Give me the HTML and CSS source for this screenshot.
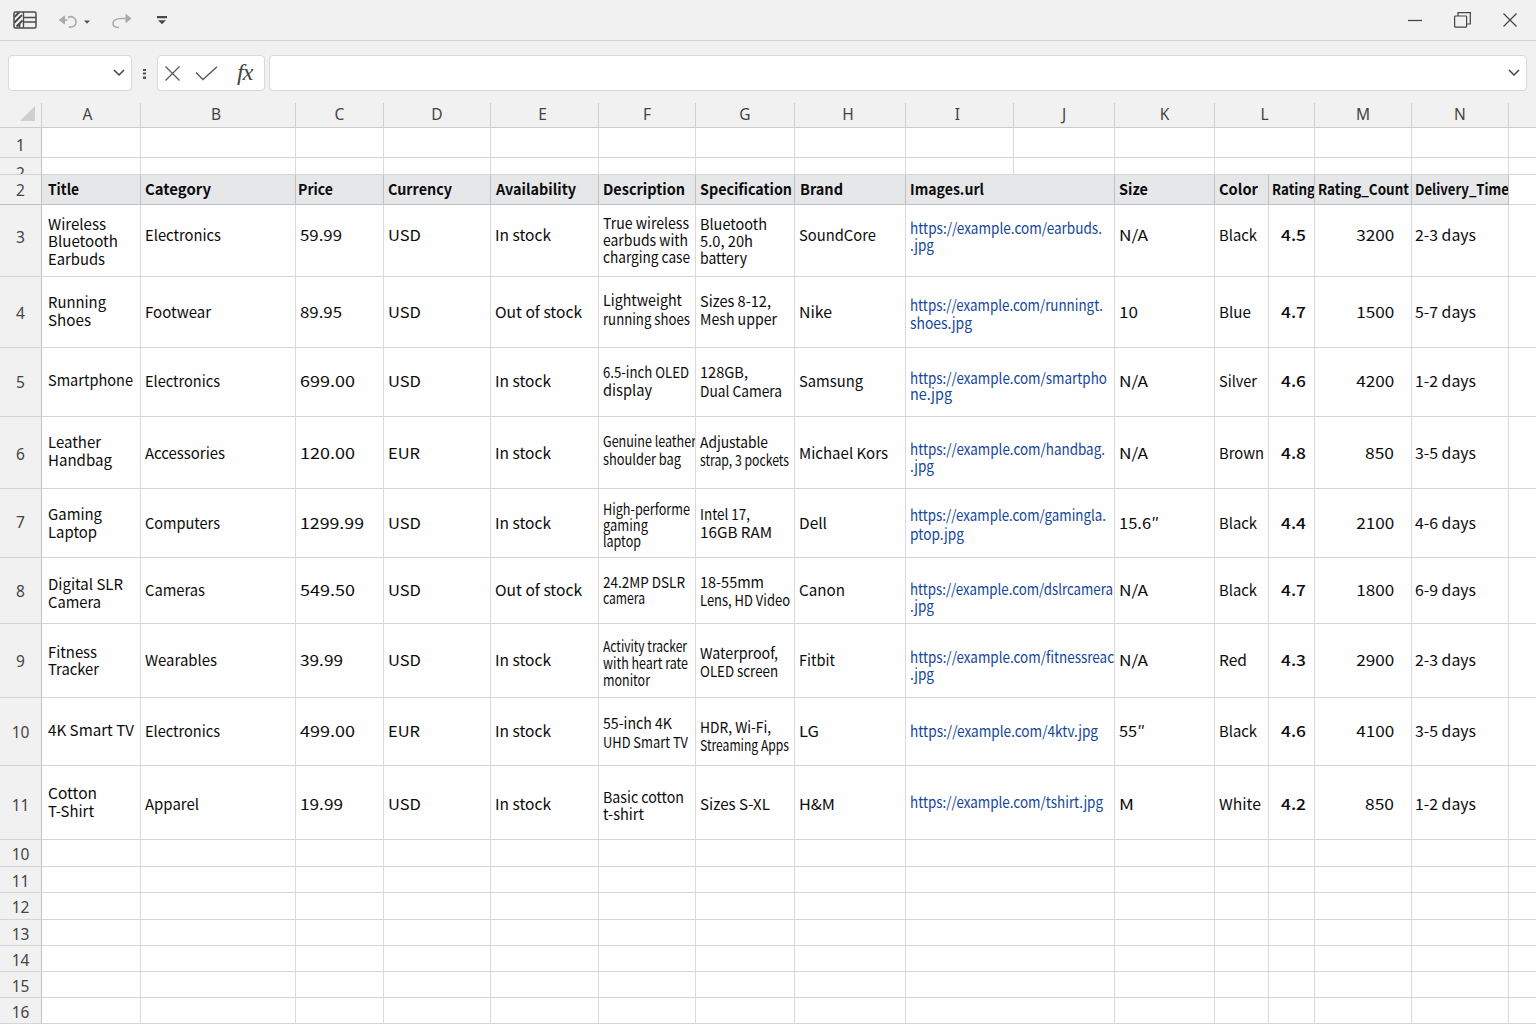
FILE: index.html
```html
<!DOCTYPE html>
<html lang="en">
<head>
  <meta charset="UTF-8" />
  <meta name="viewport" content="width=device-width, initial-scale=1" />
  <title>Products</title>
  <link rel="stylesheet" href="styles.css">
</head>
<body>
  <!-- Title bar -->
  <div class="titlebar">
    <div class="quick">
      <svg class="icon-sheet" width="24" height="18" viewBox="0 0 24 18" fill="none" stroke="#4a4a4a" stroke-width="1.5">
        <rect x="1" y="1" width="22" height="16" rx="1.5" />
        <path d="M10.500 1v16M10 6.500h13M10 11h13" stroke-width="1.300" />
        <path d="M1.500 6L6 1.500M1.500 11.500L9 4M3.500 15.500L9.500 9.500M6.500 12.500v4" stroke-width="1.900" />
      </svg>
      <svg class="icon-undo" width="20" height="15" viewBox="0 0 20 15" fill="none" stroke="#aaa" stroke-width="1.6">
        <path d="M1.500 6H9.500M10 3.500C14 1 18.500 4.500 18 8.500C17.500 12 15 13.500 10.500 13" />
        <path d="M6.500 2L1.500 6L6.500 10z" fill="#aaa" stroke-width="1" />
      </svg>
      <svg class="icon-caret" width="6" height="4" viewBox="0 0 6 4"><path d="M0 .5h6L3 3.800z" fill="#555" /></svg>
      <svg class="icon-redo" width="20" height="16" viewBox="0 0 20 16" fill="none" stroke="#aaa" stroke-width="1.600">
        <path d="M17 5.500H8.500C4 5.500 1 7.500 1 10.500C1 13 3.500 14.500 7 14.500" />
        <path d="M14 1.500l5 4l-5 4z" fill="#aaa" stroke-width="1" />
      </svg>
      <svg class="icon-more" width="10" height="9" viewBox="0 0 10 9"><path d="M0 0h10v2.200H0zM1 4.300h8L5 8.300z" fill="#4a4a4a" /></svg>
    </div>
    <div class="window">
      <svg width="14" height="16" viewBox="0 0 14 16"><path d="M0 8.500h14" stroke="#444" stroke-width="1.300" /></svg>
      <svg width="17" height="16" viewBox="0 0 17 16" fill="none" stroke="#444" stroke-width="1.200">
        <rect x=".6" y="4" width="12" height="11.200" rx=".8" />
        <path d="M4 4V.700h12.300V12h-3.500" />
      </svg>
      <svg width="14" height="16" viewBox="0 0 14 16"><path d="M.5 1.500l13 13M13.500 1.500l-13 13" stroke="#444" stroke-width="1.200" /></svg>
    </div>
  </div>

  <!-- Formula bar -->
  <div class="formula-bar">
    <div class="box name-box">
      <svg width="12" height="8" viewBox="0 0 12 8" fill="none" stroke="#444" stroke-width="1.500"><path d="M1 1l5 5l5-5" /></svg>
    </div>
    <svg class="dots" width="3" height="10" viewBox="0 0 3 10" fill="#555"><path d="M0 0h3v2H0zM0 3.500h3v2H0zM0 7.500h3V10H0z" /></svg>
    <div class="box actions">
      <svg width="15" height="15" viewBox="0 0 15 15"><path d="M.5 .5l14 14M14.500 .5l-14 14" stroke="#555" stroke-width="1.200" /></svg>
      <svg width="23" height="15" viewBox="0 0 23 15" fill="none"><path d="M1 6.500l7 7L22 .700" stroke="#555" stroke-width="1.300" /></svg>
      <span class="fx">fx</span>
    </div>
    <div class="box input-box">
      <svg width="12" height="8" viewBox="0 0 12 8" fill="none" stroke="#444" stroke-width="1.500"><path d="M1 1l5 5l5-5" /></svg>
    </div>
  </div>

  <!-- Column letters -->
  <div class="letters">
    <div class="corner"><svg width="15" height="15" viewBox="0 0 15 15"><path d="M15 0v15H0z" fill="#cdcfd1" /></svg></div>
    <div class="wide">A</div><div class="near">B</div><div>C</div><div>D</div><div class="near">E</div><div>F</div><div>G</div><div class="near">H</div>
    <div class="near">I</div><div>J</div><div>K</div><div>L</div><div>M</div><div>N</div><div></div>
  </div>

  <div class="sheet" id="sheet"></div>

  <script src="script.js"></script>
</body>
</html>
```

FILE: styles.css
```css
* {
  box-sizing: border-box;
}
body {
  margin: 0;
  width: 1536px;
  height: 1024px;
  overflow: hidden;
  background: #f1f1f1;
  color: #0c0c0c;
  font-family: "Noto Sans CJK SC", "Noto Sans", sans-serif;
  font-size: 15px;
}
svg {
  display: block;
  flex: none;
}
.titlebar {
  height: 41px;
  display: flex;
  justify-content: space-between;
  align-items: center;
  border-bottom: 1px solid #d2d3d4;
}
.quick {
  display: flex;
  align-items: center;
  padding-left: 13px;
}
.icon-undo {
  margin-left: 21px;
  margin-top: 3px;
}
.icon-caret {
  margin-left: 6px;
  margin-top: 3px;
}
.icon-redo {
  margin-left: 22px;
  margin-top: 1px;
}
.icon-more {
  margin-left: 25px;
  margin-top: 1px;
}
.window {
  display: flex;
  align-items: center;
  padding-right: 19px;
  gap: 32px;
}
.formula-bar {
  height: 62px;
  display: flex;
  align-items: center;
  padding: 2px 9px 0 8px;
}
.box {
  height: 36px;
  display: flex;
  align-items: center;
  background: #fefefe;
  border: 1px solid #d8d9da;
  border-radius: 4px;
}
.name-box {
  width: 124px;
  justify-content: flex-end;
  padding-right: 6px;
}
.dots {
  margin: 1px 11px 0 11px;
}
.actions {
  width: 108px;
  padding-left: 7px;
  gap: 15px;
}
.fx {
  font: italic 24px "Liberation Serif", serif;
  color: #444;
  letter-spacing: -1px;
  margin: -2px 0 0 4px;
}
.input-box {
  flex: 1;
  margin-left: 4px;
  justify-content: flex-end;
  padding-right: 6px;
}

.letters, .row {
  display: grid;
  grid-template-columns: 42px 99px 155px 88px 107px 108px 97px 99px 111px 209px 100px 54px 46px 97px 97px 27px;
}
.letters {
  grid-template-columns: 42px 99px 155px 88px 107px 108px 97px 99px 111px 108px 101px 100px 100px 97px 97px 27px;
  height: 25px;
  border-bottom: 1px solid #cbcccd;
  color: #444;
  font-family: "Noto Sans", sans-serif;
  font-size: 15.5px;
  line-height: 22px;
  text-align: center;
}
.letters div {
  border-right: 1px solid #d0d1d2;
}
.letters div:last-child {
  border-right: 0;
}
.letters .wide {
  padding-right: 7px;
}
.letters .near {
  padding-right: 4px;
}
.corner {
  padding: 3px 0 0 20px;
}

.row > div {
  background: #fefefe;
  border-right: 1px solid #d9dadb;
  border-bottom: 1px solid #d4d5d6;
  white-space: nowrap;
  overflow: hidden;
}
.row > div:last-child {
  border-right: 0;
}
.row > .num {
  background: #f1f1f1;
  border-right-color: #bfc1c3;
  color: #444;
  font-family: "Noto Sans", sans-serif;
  font-size: 15.5px;
  line-height: 20px;
  text-align: center;
}
.row.top {
  grid-template-columns: 42px 99px 155px 88px 107px 108px 97px 99px 111px 108px 101px 100px 100px 97px 97px 27px;
}
.row.head > div {
  border-color: #bfc1c3;
}
.row.head > div:not(.num) {
  background: #e6e7e9;
  font-weight: 700;
}
.row.head > div:last-child {
  background: #fefefe;
  border-bottom-color: #d4d5d6;
}
.line {
  display: block;
  width: max-content;
  transform-origin: left center;
}
.row > .link {
  color: #13469c;
}
.row > .rating {
  font-weight: 500;
}
.row > .count .line {
  margin-left: auto;
  margin-right: 17px;
  transform-origin: right center;
}
```

FILE: script.js
```js
const sheet = document.getElementById('sheet');

const classes = ['', '', '', '', '', '', '', '', 'link', '', '', 'rating', 'count', ''];
const indent = [6, 4, 4, 4, 4, 4, 4, 4, 4, 4, 4, 12, 0, 3];

// Cell: [middle of the first line, line pitch, text, width, text, width, ...]
const header = [
  ['Title', 31], ['Category', 66], ['Price', 35], ['Currency', 64],
  ['Availability', 80], ['Description', 82], ['Specification', 92], ['Brand', 43],
  ['Images.url', 74], ['Size', 29], ['Color', 39], ['Rating', 43],
  ['Rating_Count', 91], ['Delivery_Time', 94]
];

const rows = [
  { n: 3, top: 205, bottom: 277, y: 236, num: 237, cells: [
    [224.5, 17.3, 'Wireless', 58, 'Bluetooth', 70, 'Earbuds', 57], ['Electronics', 76], ['59.99', 42], ['USD', 33], ['In stock', 56],
    [223, 17, 'True wireless', 86, 'earbuds with', 85, 'charging case', 87], [224, 17.3, 'Bluetooth', 67, '5.0, 20h', 53, 'battery', 47],
    ['SoundCore', 77], [228, 17, 'https://example.com/earbuds.', 192, '.jpg', 24], ['N/A', 29], ['Black', 38], ['4.5', 25], ['3200', 38], ['2-3 days', 61]] },
  { n: 4, top: 277, bottom: 348, y: 312.5, num: 313, cells: [
    [303, 17.5, 'Running', 58, 'Shoes', 43], ['Footwear', 66], ['89.95', 42], ['USD', 33], ['Out of stock', 87],
    [301.5, 18.5, 'Lightweight', 79, 'running shoes', 87], [302, 18.5, 'Sizes 8-12,', 71, 'Mesh upper', 77],
    ['Nike', 33], [306, 17.5, 'https://example.com/runningt.', 193, 'shoes.jpg', 62], ['10', 19], ['Blue', 32], ['4.7', 25], ['1500', 38], ['5-7 days', 61]] },
  { n: 5, top: 348, bottom: 417, y: 382, num: 382, cells: [
    [380.5, 18, 'Smartphone', 85], ['Electronics', 75], ['699.00', 55], ['USD', 33], ['In stock', 56],
    [373, 18, '6.5-inch OLED', 86, 'display', 49], [373.5, 18.5, '128GB,', 48, 'Dual Camera', 82],
    ['Samsung', 64], [379, 16.5, 'https://example.com/smartpho', 197, 'ne.jpg', 42], ['N/A', 29], ['Silver', 38], ['4.6', 25], ['4200', 38], ['1-2 days', 61]] },
  { n: 6, top: 417, bottom: 489, y: 453.5, num: 454, cells: [
    [443, 17.5, 'Leather', 53, 'Handbag', 64], ['Accessories', 80], ['120.00', 55], ['EUR', 32], ['In stock', 56],
    [442, 18, 'Genuine leather', 93, 'shoulder bag', 78], [443, 18, 'Adjustable', 68, 'strap, 3 pockets', 89],
    ['Michael Kors', 89], [449, 17, 'https://example.com/handbag.', 195, '.jpg', 24], ['N/A', 29], ['Brown', 45], ['4.8', 25], ['850', 29], ['3-5 days', 61]] },
  { n: 7, top: 489, bottom: 558, y: 523.5, num: 522, cells: [
    [515, 17.5, 'Gaming', 54, 'Laptop', 49], ['Computers', 75], ['1299.99', 64], ['USD', 33], ['In stock', 56],
    [510, 16, 'High-performe', 87, 'gaming', 45, 'laptop', 38], [515, 18.5, 'Intel 17,', 50, '16GB RAM', 72],
    ['Dell', 28], [516.5, 18.5, 'https://example.com/gamingla.', 196, 'ptop.jpg', 54], ['15.6″', 40], ['Black', 38], ['4.4', 25], ['2100', 38], ['4-6 days', 61]] },
  { n: 8, top: 558, bottom: 624, y: 591, num: 591, cells: [
    [585, 17.5, 'Digital SLR', 75, 'Camera', 53], ['Cameras', 60], ['549.50', 55], ['USD', 33], ['Out of stock', 87],
    [583, 16.5, '24.2MP DSLR', 82, 'camera', 42], [583, 17.5, '18-55mm', 64, 'Lens, HD Video', 90],
    ['Canon', 46], [589, 17, 'https://example.com/dslrcamera', 203, '.jpg', 24], ['N/A', 29], ['Black', 38], ['4.7', 25], ['1800', 38], ['6-9 days', 61]] },
  { n: 9, top: 624, bottom: 698, y: 661, num: 661, cells: [
    [652.5, 17.5, 'Fitness', 49, 'Tracker', 51], ['Wearables', 72], ['39.99', 43], ['USD', 33], ['In stock', 56],
    [646, 17, 'Activity tracker', 84, 'with heart rate', 85, 'monitor', 47], [654, 18, 'Waterproof,', 78, 'OLED screen', 78],
    ['Fitbit', 36], [657, 17, 'https://example.com/fitnessreac', 204, '.jpg', 24], ['N/A', 29], ['Red', 28], ['4.3', 25], ['2900', 38], ['2-3 days', 61]] },
  { n: 10, top: 698, bottom: 766, y: 732, num: 732, cells: [
    [731, 18, '4K Smart TV', 86], ['Electronics', 75], ['499.00', 55], ['EUR', 32], ['In stock', 56],
    [723.5, 19, '55-inch 4K', 69, 'UHD Smart TV', 85], [728, 17.5, 'HDR, Wi-Fi,', 71, 'Streaming Apps', 89],
    ['LG', 20], [731.5, 18, 'https://example.com/4ktv.jpg', 188], ['55″', 26], ['Black', 38], ['4.6', 25], ['4100', 38], ['3-5 days', 61]] },
  { n: 11, top: 766, bottom: 840, y: 805, num: 805, cells: [
    [794, 17.5, 'Cotton', 49, 'T-Shirt', 46], ['Apparel', 54], ['19.99', 43], ['USD', 33], ['In stock', 56],
    [797, 17, 'Basic cotton', 81, 't-shirt', 41], [805, 18, 'Sizes S-XL', 70],
    ['H&M', 36], [803, 18, 'https://example.com/tshirt.jpg', 193], ['M', 15], ['White', 42], ['4.2', 25], ['850', 29], ['1-2 days', 61]] }
];

function addRow(n, top, bottom, y, cls) {
  const row = document.createElement('div');
  row.className = 'row ' + cls;
  row.style.height = (bottom - top) + 'px';
  const num = document.createElement('div');
  num.className = 'num';
  num.textContent = n;
  num.style.paddingTop = Math.max(0, y - top - 10) + 'px';
  row.appendChild(num);
  sheet.appendChild(row);
  return row;
}

function addCell(row, cls, left, top, cell) {
  const el = document.createElement('div');
  el.className = cls;
  row.appendChild(el);
  if (!cell) return;
  const [y, pitch, ...parts] = cell;
  el.style.paddingLeft = left + 'px';
  el.style.paddingTop = (y - top - pitch / 2 - 0.8) + 'px';
  el.style.lineHeight = pitch + 'px';
  for (let i = 0; i < parts.length; i += 2) {
    const line = document.createElement('span');
    line.className = 'line';
    line.textContent = parts[i];
    el.appendChild(line);
    // condense or widen the line to its width
    const scale = parts[i + 1] / line.getBoundingClientRect().width;
    line.style.transform = 'scaleX(' + scale.toFixed(4) + ')';
  }
}

function addEmpty(n, top, bottom, y, cls) {
  const row = addRow(n, top, bottom, y, cls);
  for (let i = 0; i < 15; i++) addCell(row, '', 0, top);
}

addEmpty(1, 128, 158, 145, 'top');
addEmpty(2, 158, 175, 173, 'top');

const head = addRow(2, 175, 205, 190, 'head');
const headIndent = [6, 4, 2, 4, 5, 4, 4, 5, 4, 4, 4, 3, 3, 3];
header.forEach((cell, i) => addCell(head, '', headIndent[i], 175, [190, 20, ...cell]));
addCell(head, '', 0, 175);

rows.forEach(r => {
  const row = addRow(r.n, r.top, r.bottom, r.num, '');
  r.cells.forEach((cell, i) => {
    const full = typeof cell[0] === 'string' ? [r.y, 20, ...cell] : cell;
    addCell(row, classes[i], indent[i], r.top, full);
  });
  addCell(row, '', 0, r.top);
});

const edges = [840, 867, 893, 920, 946, 972, 998, 1024];
for (let i = 0; i < 7; i++) addEmpty(10 + i, edges[i], edges[i + 1], edges[i] + 14, '');
```
